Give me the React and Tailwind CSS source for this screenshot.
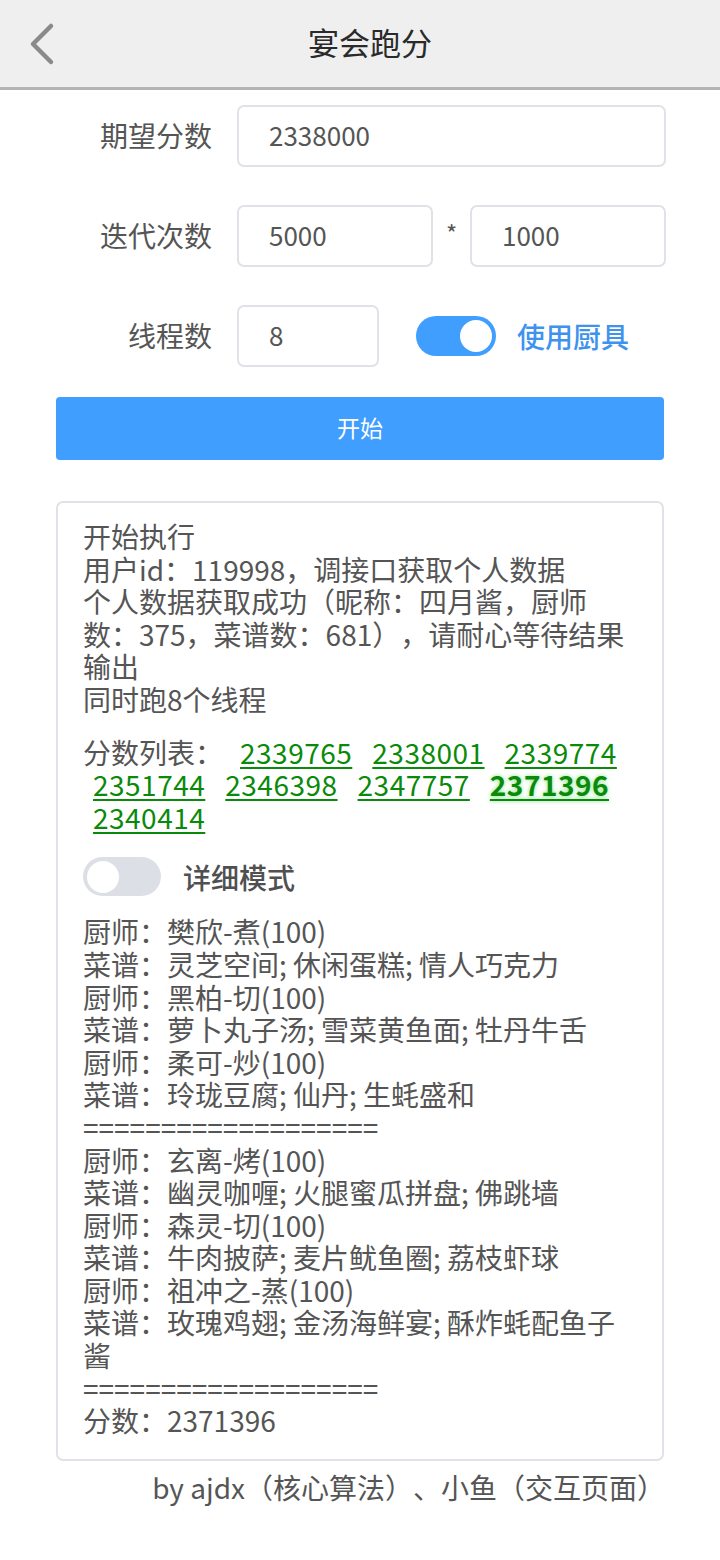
import React from "react";

const font = { fontFamily: '"Noto Sans CJK SC", "Noto Sans", sans-serif' };

function Box({ w, children }) {
  return (
    <div className={`${w} h-[62px] border-2 border-[#e0e2e8] rounded-[7px] flex items-center pl-[30px] pb-[4px] text-[26px] text-[#555] bg-white`}>
      {children}
    </div>
  );
}

function Toggle({ on }) {
  return on ? (
    <div className="w-[80px] h-[40px] rounded-full bg-[#409eff] flex items-center justify-end pr-[4px]">
      <div className="w-[32px] h-[32px] rounded-full bg-white" />
    </div>
  ) : (
    <div className="w-[78px] h-[39px] rounded-full bg-[#dcdfe6] flex items-center justify-start pl-[4px]">
      <div className="w-[32px] h-[32px] rounded-full bg-white" />
    </div>
  );
}

const scores = ["2339765", "2338001", "2339774", "2351744", "2346398", "2347757", "2371396", "2340414"];

const details = [
  "厨师：樊欣-煮(100)",
  "菜谱：灵芝空间; 休闲蛋糕; 情人巧克力",
  "厨师：黑柏-切(100)",
  "菜谱：萝卜丸子汤; 雪菜黄鱼面; 牡丹牛舌",
  "厨师：柔可-炒(100)",
  "菜谱：玲珑豆腐; 仙丹; 生蚝盛和",
  "===================",
  "厨师：玄离-烤(100)",
  "菜谱：幽灵咖喱; 火腿蜜瓜拼盘; 佛跳墙",
  "厨师：森灵-切(100)",
  "菜谱：牛肉披萨; 麦片鱿鱼圈; 荔枝虾球",
  "厨师：祖冲之-蒸(100)",
  "菜谱：玫瑰鸡翅; 金汤海鲜宴; 酥炸蚝配鱼子酱",
  "===================",
  "分数：2371396",
];

export default function App() {
  return (
    <div className="w-[720px] min-h-[1560px] bg-white [text-spacing-trim:space-all]" style={font}>
      <div className="h-[90px] bg-[#efefef] border-b-[3px] border-[#b4b4b4] flex items-center relative">
        <svg className="absolute left-[26px] top-[22px]" width="32" height="44" viewBox="0 0 32 44">
          <polyline points="25,4 7,22 25,40" fill="none" stroke="#8a8a8a" strokeWidth="4.5" strokeLinecap="round" strokeLinejoin="round" />
        </svg>
        <div className="w-full text-center text-[31px] text-[#2a2a2a] pl-[20px] pb-[2px]">宴会跑分</div>
      </div>

      <div className="flex flex-col gap-[38px] mt-[15px]">
        <div className="flex items-center gap-[25px]">
          <div className="w-[212px] text-right text-[28px] text-[#555] pb-[3px]">期望分数</div>
          <Box w="w-[429px]">2338000</Box>
        </div>
        <div className="flex items-center gap-[25px]">
          <div className="w-[212px] text-right text-[28px] text-[#555] pb-[3px]">迭代次数</div>
          <div className="flex items-center">
            <Box w="w-[196px]">5000</Box>
            <div className="w-[37px] text-center text-[24px] text-[#555] -mt-[6px]">*</div>
            <Box w="w-[196px]">1000</Box>
          </div>
        </div>
        <div className="flex items-center gap-[25px]">
          <div className="w-[212px] text-right text-[28px] text-[#555] pb-[3px]">线程数</div>
          <div className="flex items-center">
            <Box w="w-[142px]">8</Box>
            <div className="ml-[37px]">
              <Toggle on />
            </div>
            <div className="ml-[21px] text-[28px] text-[#3f93ee] font-medium">使用厨具</div>
          </div>
        </div>
      </div>

      <div className="mx-[56px] mt-[30px] h-[63px] rounded-[4px] bg-[#409eff] flex items-center justify-center text-[23px] text-white pb-[3px]">
        开始
      </div>

      <div className="mx-[56px] mt-[41px] border-2 border-[#e0e2e8] rounded-[7px] pl-[25px] pr-[25px] pt-[17px] pb-[22px] text-[28px] leading-[32.6px] text-[#555]">
        <div className="mb-[20px]">
          <div>开始执行</div>
          <div>用户id：119998，调接口获取个人数据</div>
          <div>个人数据获取成功（昵称：四月酱，厨师数：375，菜谱数：681），请耐心等待结果输出</div>
          <div>同时跑8个线程</div>
        </div>
        <div className="flex flex-wrap mb-[24px]">
          <span className="mr-[7px]">分数列表：</span>
          {scores.map((s) => (
            <span
              key={s}
              className={`mx-[10px] underline underline-offset-[3px] text-[#0a8a0a] tracking-[0.5px] ${s === "2371396" ? "font-bold [text-shadow:0_0_4px_#7ee07e]" : ""}`}
            >
              {s}
            </span>
          ))}
        </div>
        <div className="flex items-center mb-[19px]">
          <Toggle on={false} />
          <div className="ml-[22px] text-[#505050] font-medium">详细模式</div>
        </div>
        <div>
          {details.map((d, i) => (
            <div key={i}>{d}</div>
          ))}
        </div>
      </div>

      <div className="mt-[10px] pr-[55px] text-right text-[28px] leading-[32.6px] text-[#555]">
        by ajdx（核心算法）、小鱼（交互页面）
      </div>
    </div>
  );
}
